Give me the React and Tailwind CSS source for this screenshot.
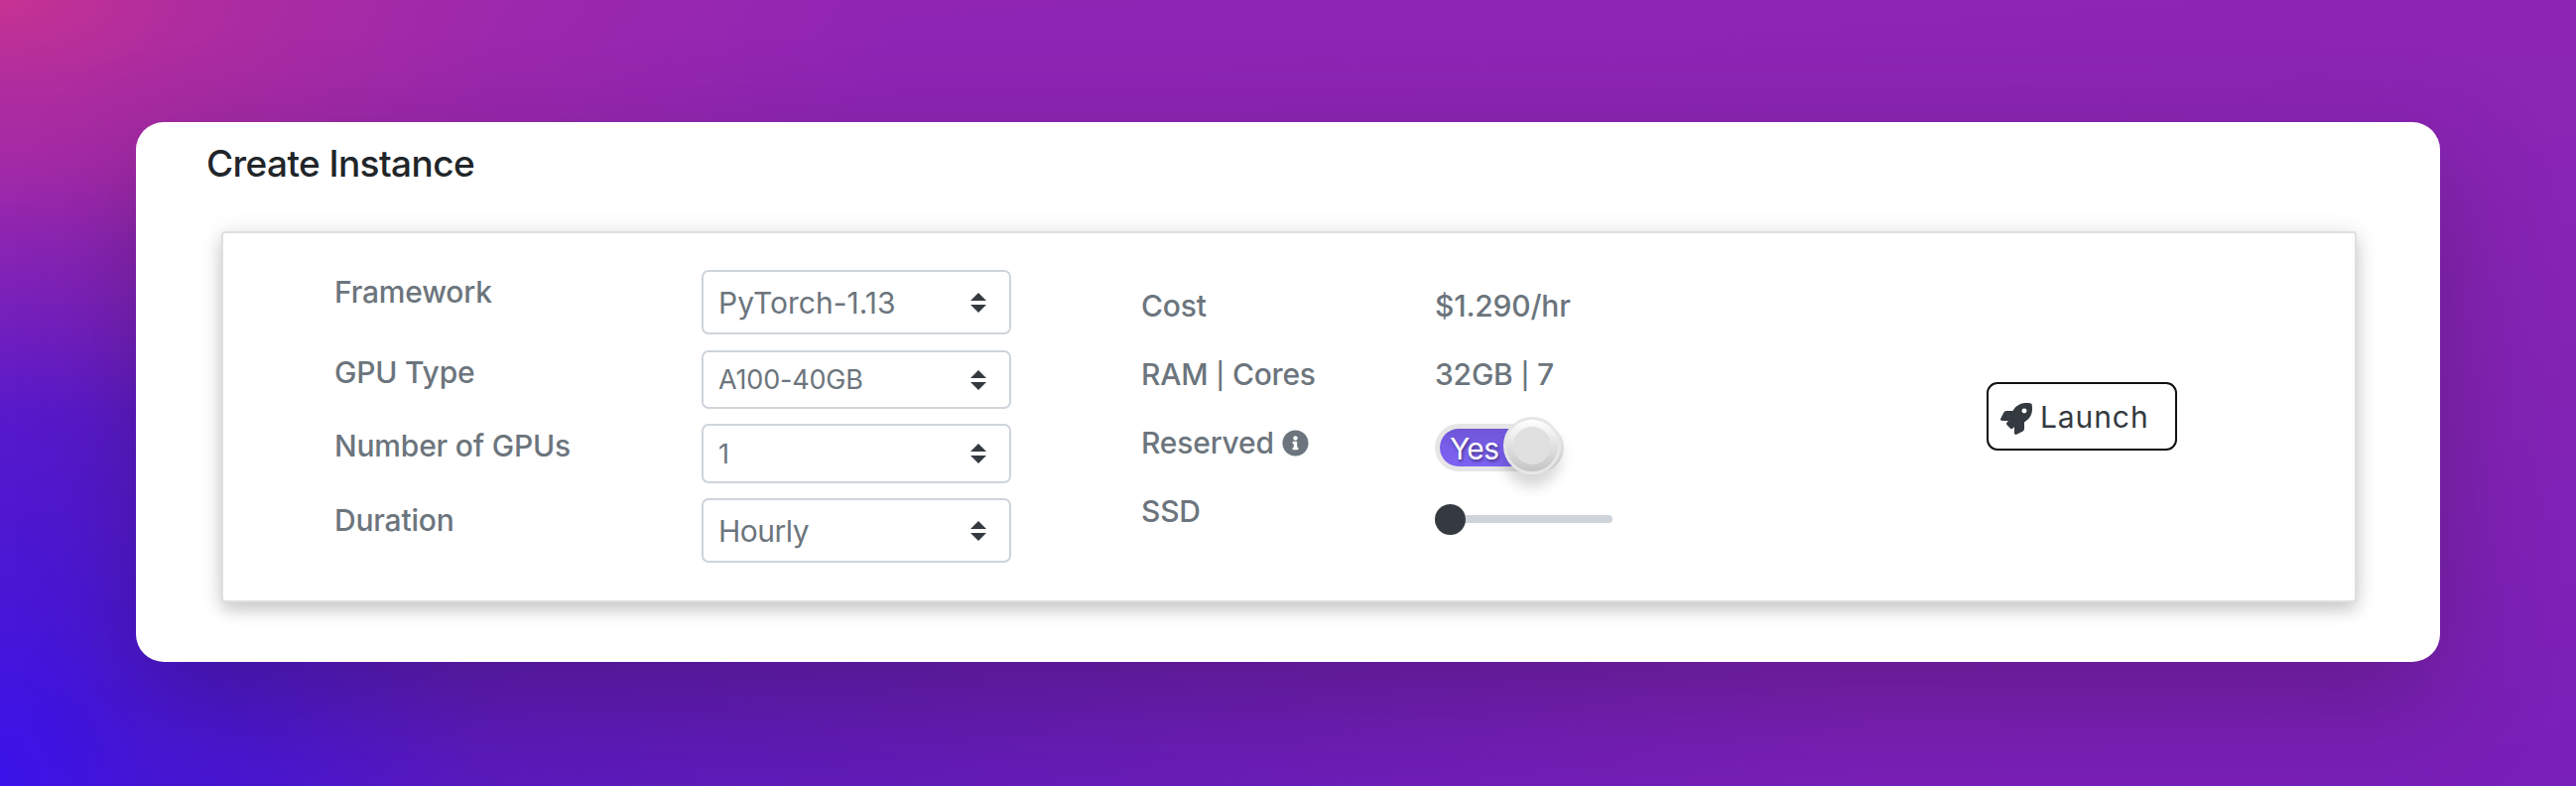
import { FaRocket, FaInfoCircle } from "react-icons/fa";

function Label({ className = "", children }) {
  return <div className={`h-[40px] whitespace-nowrap leading-[40px] tracking-[-0.2px] ${className}`}>{children}</div>;
}

function Pipe() {
  return <span className="inline-block text-[26px] leading-none">|</span>;
}

function Select({ className, children }) {
  return (
    <div className={`flex w-[312px] items-center justify-between rounded-[7px] border-2 border-[#ced4da] bg-white pl-[15px] pr-[23px] text-[#6c757d] ${className}`}>
      <span className="whitespace-nowrap pt-[2px]">{children}</span>
      <svg className="h-[20px] w-[16px]" viewBox="0 0 4 5" fill="#343a40">
        <path d="M2 0L0 2h4zm0 5L0 3h4z" />
      </svg>
    </div>
  );
}

function Toggle() {
  return (
    <div className="flex h-[48px] w-[130px] items-center rounded-full bg-[#e6e6e6] p-[5px]">
      <div className="flex h-[38px] w-[110px] shrink-0 items-center rounded-full bg-linear-to-b from-[#6f55d6] via-[#785eea] to-[#7e62f3] pl-[10px]">
        <span className="pt-[3px] text-[30px] font-normal tracking-[-0.7px] text-white [text-shadow:1px_2px_3px_rgba(0,0,0,.45)]">Yes</span>
      </div>
      <div className="relative -ml-[46px] -mt-[4px] flex size-[58px] shrink-0 items-center justify-center rounded-full border-[3px] border-[#e6e6e6] bg-linear-to-b from-white to-[#c4c4c4] shadow-[0_12px_14px_rgba(0,0,0,.16)]">
        <div className="size-[38px] rounded-full bg-[#e0e0e0]" />
      </div>
    </div>
  );
}

export default function App() {
  return (
    <div className="h-[792px] w-[2596px] bg-[radial-gradient(ellipse_900px_420px_at_0_0,rgba(198,50,146,1),rgba(190,48,148,.65)_22%,rgba(184,46,154,.28)_58%,transparent),radial-gradient(ellipse_480px_640px_at_0_100%,rgba(58,18,234,.95)_2%,rgba(62,20,226,.66)_30%,rgba(64,20,222,.5)_60%,transparent),radial-gradient(ellipse_1900px_620px_at_0_100%,rgba(60,20,200,.62)_10%,rgba(66,22,185,.42)_50%,transparent),linear-gradient(176deg,#9226b4,#8223b4_60%,#791fb9)] px-[137px] pt-[123px] font-[Inter,sans-serif] text-[30px] font-medium text-[#6c757d]">
      <main className="h-[543.5px] w-[2322px] rounded-[28px] bg-white pl-[71px] pt-[18px] shadow-[0_40px_110px_rgba(50,18,60,.34)]">
        <h1 className="h-[92px] text-[37px] leading-[48px] tracking-[-0.6px] text-[#212529]">Create Instance</h1>
        <section className="ml-[15px] flex h-[374px] w-[2152px] rounded-[4px] border-2 border-[#dfdfdf] bg-white shadow-[0_8px_16px_rgba(0,0,0,.16),0_2px_26px_rgba(0,0,0,.1)]">
          <div className="ml-[112px] w-[370px] pt-[39px]">
            <Label className="mb-[41px]">Framework</Label>
            <Label className="mb-[34px]">GPU Type</Label>
            <Label className="mb-[35px]">Number of GPUs</Label>
            <Label>Duration</Label>
          </div>
          <div className="flex w-[443px] flex-col pt-[37px] font-normal">
            <Select className="mb-[16px] h-[65px]">PyTorch-1.13</Select>
            <Select className="mb-[15px] h-[59px] text-[27px] tracking-[-0.2px]">A100-40GB</Select>
            <Select className="mb-[15px] h-[60px] text-[27px]">1</Select>
            <Select className="h-[65px] tracking-[-0.5px]">Hourly</Select>
          </div>
          <div className="w-[296px] pt-[53px]">
            <Label className="mb-[29px]">Cost</Label>
            <Label className="mb-[29px]">RAM <Pipe /> Cores</Label>
            <Label className="mb-[29px] flex items-center gap-[8px]">Reserved<FaInfoCircle className="size-[27px]" /></Label>
            <Label>SSD</Label>
          </div>
          <div className="w-[556px] pt-[53px]">
            <Label className="mb-[29px]">$1.290/hr</Label>
            <Label className="mb-[30px]">32GB <Pipe /> 7</Label>
            <Toggle />
            <div className="mt-[32px] flex h-[32px] items-center">
              <div className="size-[31px] rounded-full bg-[#343a40]" />
              <div className="h-[8px] w-[148px] rounded-r-full bg-[#ced4da]" />
            </div>
          </div>
          <button className="mt-[150px] flex h-[69px] w-[192px] items-center gap-[8px] rounded-[11px] border-2 border-[#111] pl-[12px] font-normal text-[#343a40]">
            <FaRocket className="mt-[5px] size-[32px]" />
            <span className="pt-px tracking-[0.9px]">Launch</span>
          </button>
        </section>
      </main>
    </div>
  );
}
